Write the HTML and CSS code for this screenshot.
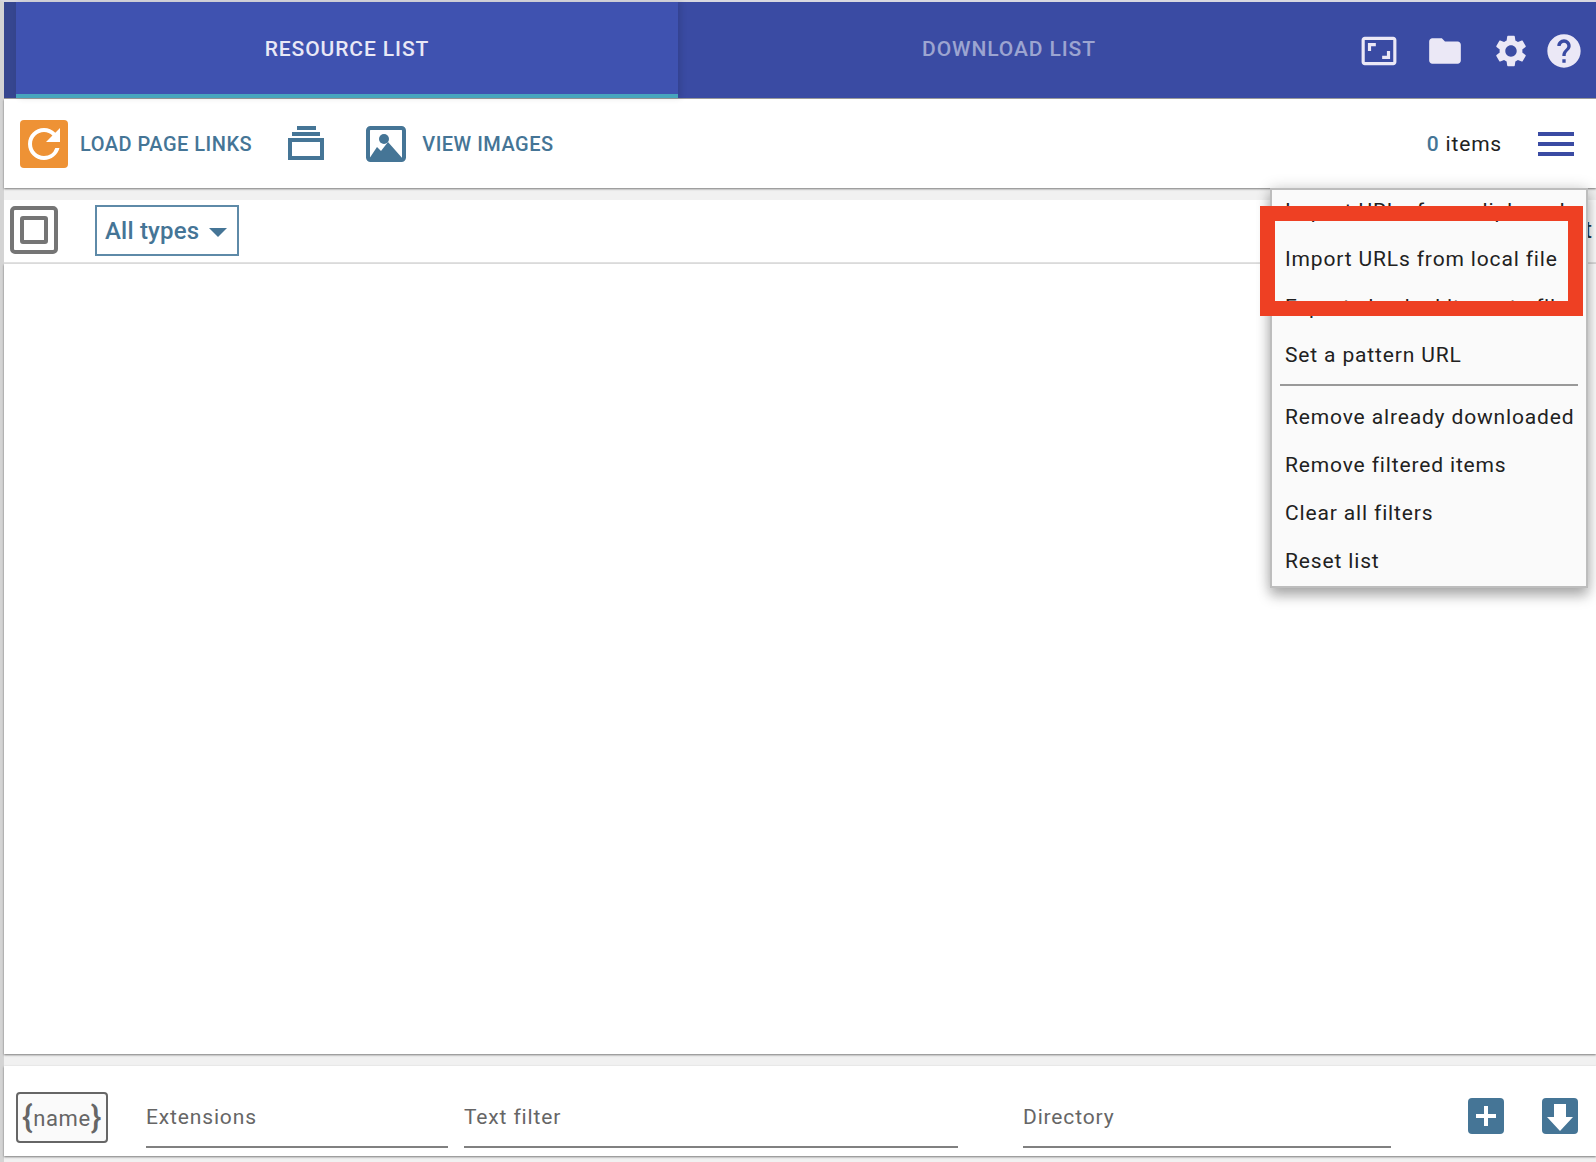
FILE: index.html
```html
<!DOCTYPE html>
<html lang="en">
<head>
<meta charset="utf-8">
<title>Resource list</title>
<link rel="stylesheet" href="styles.css">
</head>
<body>
<div class="app">
  <header class="header">
    <div class="tab tab-active">RESOURCE LIST</div>
    <div class="tab">DOWNLOAD LIST</div>
    <div class="header-icons">
      <svg class="hi hi-ratio" viewBox="0 0 24 24"><path d="M19 12h-2v3h-3v2h5v-5zM7 9h3V7H5v5h2V9zm14-6H3c-1.1 0-2 .9-2 2v14c0 1.1.9 2 2 2h18c1.1 0 2-.9 2-2V5c0-1.1-.9-2-2-2zm0 16.01H3V4.99h18v14.02z"/></svg>
      <svg class="hi hi-folder" viewBox="0 0 24 24"><path d="M10 4H4c-1.1 0-1.99.9-1.99 2L2 18c0 1.1.9 2 2 2h16c1.1 0 2-.9 2-2V8c0-1.1-.9-2-2-2h-8l-2-2z"/></svg>
      <svg class="hi hi-gear" viewBox="0 0 24 24"><path d="M19.14 12.94c.04-.3.06-.61.06-.94 0-.32-.02-.64-.07-.94l2.03-1.58c.18-.14.23-.41.12-.61l-1.92-3.32c-.12-.22-.37-.29-.59-.22l-2.39.96c-.5-.38-1.03-.7-1.62-.94l-.36-2.54c-.04-.24-.24-.41-.48-.41h-3.84c-.24 0-.43.17-.47.41l-.36 2.54c-.59.24-1.13.57-1.62.94l-2.39-.96c-.22-.08-.47 0-.59.22L2.74 8.87c-.12.21-.08.47.12.61l2.03 1.58c-.05.3-.09.63-.09.94s.02.64.07.94l-2.03 1.58c-.18.14-.23.41-.12.61l1.92 3.32c.12.22.37.29.59.22l2.39-.96c.5.38 1.03.7 1.62.94l.36 2.54c.05.24.24.41.48.41h3.84c.24 0 .44-.17.47-.41l.36-2.54c.59-.24 1.13-.56 1.62-.94l2.39.96c.22.08.47 0 .59-.22l1.92-3.32c.12-.22.07-.47-.12-.61l-2.01-1.58zM12 15.6c-1.98 0-3.6-1.62-3.6-3.6s1.62-3.6 3.6-3.6 3.6 1.62 3.6 3.6-1.62 3.6-3.6 3.6z"/></svg>
      <svg class="hi hi-help" viewBox="0 0 24 24"><path d="M12 2C6.48 2 2 6.48 2 12s4.48 10 10 10 10-4.48 10-10S17.52 2 12 2zm1 17h-2v-2h2v2zm2.07-7.75l-.9.92C13.45 12.9 13 13.5 13 15h-2v-.5c0-1.1.45-2.1 1.17-2.83l1.24-1.26c.37-.36.59-.86.59-1.41 0-1.1-.9-2-2-2s-2 .9-2 2H8c0-2.21 1.79-4 4-4s4 1.79 4 4c0 .88-.36 1.68-.93 2.25z"/></svg>
    </div>
  </header>

  <section class="toolbar">
    <svg class="load-icon" viewBox="0 0 24 24"><rect width="24" height="24" rx="2" class="orange"/><path class="white" d="M17.65 6.35A7.958 7.958 0 0 0 12 4c-4.42 0-7.99 3.58-7.99 8s3.57 8 7.99 8c3.73 0 6.84-2.55 7.73-6h-2.08A5.99 5.99 0 0 1 12 18c-3.31 0-6-2.69-6-6s2.69-6 6-6c1.66 0 3.14.69 4.22 1.78L13 11h7V4l-2.35 2.35z"/></svg>
    <span class="tool-label tool-load">LOAD PAGE LINKS</span>
    <svg class="stack-icon" viewBox="0 0 36 36"><rect class="steel" x="9" y="1" width="19" height="4"/><rect class="steel" x="4" y="7" width="28" height="4"/><path class="steel" d="M0 13h36v22H0zM4 17v14h28V17z" fill-rule="evenodd"/></svg>
    <svg class="image-icon" viewBox="0 0 40 36"><rect class="steel-line" x="2" y="2" width="36" height="32" rx="2.5"/><circle class="steel" cx="18" cy="13" r="5"/><path class="steel" d="M3 33l8-12 4 4 7-9 15 17z"/></svg>
    <span class="tool-label">VIEW IMAGES</span>
    <span class="count"><b class="count-num">0</b> items</span>
    <div class="burger"><i></i><i></i><i></i></div>
  </section>

  <section class="filters">
    <div class="check"><div class="check-inner"></div></div>
    <div class="select"><span>All types</span><i class="caret"></i></div>
    <span class="sort">Sort</span>
  </section>

  <main class="list"></main>

  <footer class="footer">
    <div class="mask"><span class="brace">{</span>name<span class="brace">}</span></div>
    <div class="field field-ext"><span>Extensions</span></div>
    <div class="field field-text"><span>Text filter</span></div>
    <div class="field field-dir"><span>Directory</span></div>
    <svg class="square square-add" viewBox="0 0 36 36"><rect class="steel" width="36" height="36" rx="4"/><path class="white" d="M16 8h4v8h8v4h-8v8h-4v-8H8v-4h8z"/></svg>
    <svg class="square" viewBox="0 0 36 36"><rect class="steel" width="36" height="36" rx="4"/><path class="white" d="M12 6h12v13h7L18 33 5 19h7z"/></svg>
  </footer>
</div>

<nav class="menu">
  <div class="menu-item menu-first">Import URLs from clipboard</div>
  <div class="menu-item">Import URLs from local file</div>
  <div class="menu-item">Export checked items to file</div>
  <div class="menu-item">Set a pattern URL</div>
  <hr class="menu-sep">
  <div class="menu-item">Remove already downloaded</div>
  <div class="menu-item">Remove filtered items</div>
  <div class="menu-item">Clear all filters</div>
  <div class="menu-item">Reset list</div>
</nav>
<div class="callout"></div>
</body>
</html>
```
FILE: styles.css
```css
* { box-sizing: border-box; }
html, body { margin: 0; height: 100%; overflow: hidden; }
body {
  position: relative;
  background: #f1f1f1;
  font-family: Roboto, "Liberation Sans", sans-serif;
  color: #212121;
}
.app {
  height: 1162px;
  display: flex;
  flex-direction: column;
  border-left: 4px solid #d4d4d4;
  border-top: 2px solid #d8d8e0;
}
.header {
  flex: 0 0 97px;
  display: flex;
  background: #3a4ba3;
  padding-left: 12px;
  border-bottom: 1px solid #9a9a9a;
  box-shadow: inset 12px 0 0 #36468f;
  position: relative;
  z-index: 3;
}
.tab {
  flex: 0 0 662px;
  display: flex;
  align-items: center;
  justify-content: center;
  padding-bottom: 2px;
  font-size: 21px;
  font-weight: 500;
  letter-spacing: .9px;
  color: rgba(255,255,255,.5);
}
.tab-active {
  background: #3f52b0;
  color: #e9e8f6;
  padding: 2px 0 0;
  border-bottom: 4px solid #47a5bd;
  box-shadow: 3px 0 6px rgba(0,0,0,.12);
}
.header-icons {
  flex: 1;
  display: flex;
  align-items: center;
  justify-content: flex-end;
  padding: 2px 12px 0 0;
}
.hi { fill: #ebe8f6; display: block; }
.hi-ratio, .hi-folder, .hi-gear { width: 38px; height: 38px; }
.hi-ratio { margin-right: 28px; }
.hi-folder { margin-right: 28px; }
.hi-gear { margin-right: 14px; }
.hi-help { width: 40px; height: 40px; }

.toolbar {
  flex: 0 0 89px;
  display: flex;
  align-items: center;
  padding: 0 22px 0 16px;
  background: #fff;
  box-shadow: 0 1px 2px rgba(0,0,0,.5);
  position: relative;
  z-index: 2;
}
.load-icon { width: 48px; height: 48px; display: block; margin-right: 12px; }
.orange { fill: #ee9235; }
.white { fill: #fff; }
.steel { fill: #457596; }
.steel-line { fill: none; stroke: #457596; stroke-width: 4; }
.tool-label {
  font-size: 20px;
  font-weight: 500;
  letter-spacing: .5px;
  color: #457596;
}
.stack-icon { width: 36px; height: 36px; display: block; margin: -2px 42px 0 36px; }
.image-icon { width: 40px; height: 36px; display: block; margin-right: 16px; }
.count { margin-left: auto; margin-right: 36px; font-size: 21px; letter-spacing: .8px; }
.count-num { font-weight: 500; color: #457596; }
.burger { width: 36px; display: flex; flex-direction: column; gap: 6px; }
.burger i { display: block; height: 4px; background: #3a4ba3; }

.filters {
  flex: 0 0 64px;
  margin-top: 12px;
  display: flex;
  align-items: center;
  padding: 0 4px 2px 6px;
  background: #fff;
  border-bottom: 2px solid #e2e2e2;
}
.check {
  width: 48px;
  height: 48px;
  border: 4px solid #757575;
  border-radius: 5px;
  display: flex;
  align-items: center;
  justify-content: center;
  margin-right: 37px;
}
.check-inner { width: 28px; height: 28px; border: 4px solid #757575; border-radius: 3px; }
.select {
  width: 144px;
  height: 51px;
  border: 2px solid #5e8aa8;
  display: flex;
  align-items: center;
  padding: 2px 0 0 8px;
  font-size: 24px;
  font-weight: 500;
  letter-spacing: .2px;
  color: #457596;
}
.caret {
  margin-left: 10px;
  margin-top: 2px;
  border-left: 9px solid transparent;
  border-right: 9px solid transparent;
  border-top: 9px solid #457596;
}
.sort { margin-left: auto; font-size: 23px; color: #1f3a4a; }

.list {
  flex: 1;
  background: #fff;
  box-shadow: 0 1px 2px rgba(0,0,0,.5);
  position: relative;
  z-index: 1;
}
.footer {
  flex: 0 0 90px;
  margin: 12px 0 6px;
  display: flex;
  align-items: flex-end;
  padding: 0 14px 8px 12px;
  background: #fff;
  box-shadow: 0 1px 2px rgba(0,0,0,.5);
}
.mask {
  width: 92px;
  height: 51px;
  margin-bottom: 5px;
  margin-right: 38px;
  flex: none;
  border: 2px solid #666;
  border-radius: 4px;
  background: #fafafa;
  display: flex;
  align-items: center;
  justify-content: center;
  padding-top: 2px;
  font-size: 22px;
  letter-spacing: .6px;
  color: #666;
}
.brace { font-size: 32px; font-weight: 500; line-height: 1; margin-top: -4px; }
.field {
  height: 50px;
  border-bottom: 2px solid #808080;
  padding: 0 0 17px;
  display: flex;
  align-items: flex-end;
  font-size: 21px;
  letter-spacing: .85px;
  color: #666;
  flex: none;
}
.field-ext { width: 302px; margin-right: 16px; }
.field-text { width: 494px; margin-right: 65px; }
.field-dir { width: 368px; margin-right: 77px; }
.square { width: 36px; height: 36px; display: block; flex: none; margin-bottom: 14px; }
.square-add { margin-right: 38px; }

.menu {
  position: absolute;
  top: 188px;
  left: 1270px;
  width: 318px;
  height: 400px;
  padding: 0 0 0 13px;
  background: #fafafa;
  border: 2px solid #bdbdbd;
  box-shadow: 0 8px 12px rgba(0,0,0,.28), 0 0 14px rgba(0,0,0,.16);
  z-index: 5;
}
.menu-item {
  height: 48px;
  display: flex;
  align-items: center;
  font-size: 21px;
  letter-spacing: .85px;
  white-space: nowrap;
  color: #212121;
}
.menu-first { margin-top: -3px; }
.menu-sep {
  margin: 5px 8px 7px -5px;
  border: 0;
  height: 2px;
  background: #999;
}
.callout {
  position: absolute;
  left: 1260px;
  top: 206px;
  width: 323px;
  height: 110px;
  border: 15px solid #ee4023;
  z-index: 6;
}
```
